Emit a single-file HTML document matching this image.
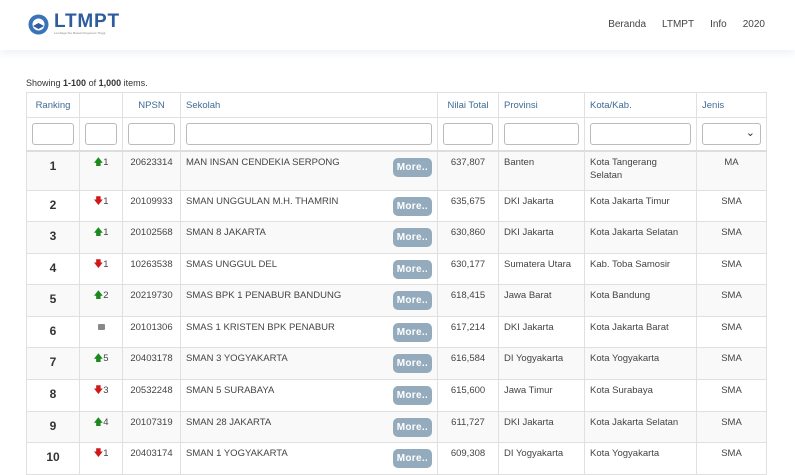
<!DOCTYPE html>
<html><head><style>
body{margin:0;width:795px;height:471px;overflow:hidden;background:#fff;font-family:"Liberation Sans",sans-serif;color:#333}
.hdr{height:50px;position:relative;box-shadow:0 4px 8px #eef3f9}
.logo{position:absolute;left:28px;top:13px;display:flex;align-items:center}
.logo .t{font-size:19px;font-weight:bold;color:#2d5d9f;letter-spacing:.8px;line-height:18px}
.logo .s{font-size:3px;color:#888}
.nav{position:absolute;top:19px;right:30px;font-size:10px;color:#444}
.nav span{margin-left:16px}
.show{position:absolute;left:26px;top:78px;font-size:9px;color:#333}
table{position:absolute;left:26px;top:92px;border-collapse:collapse;font-size:9.5px;table-layout:fixed;width:740px;line-height:13px}
td,th{border:1px solid #e0e0e0;padding:0 5px;vertical-align:top}
th{height:24px;vertical-align:middle;text-align:left;color:#3e6b95;font-weight:normal;font-size:9.5px}
.f td{height:32px;vertical-align:middle;border-bottom:2px solid #ddd}
.f div{height:22px;border:1px solid #bbb;border-radius:3px;box-sizing:border-box}
tr.r td{height:31.6px;padding-top:4px;box-sizing:border-box;color:#444}
tr.r:nth-child(odd) td{background:#f9f9f9}
.rk{font-size:12px;font-weight:bold;text-align:center;padding-top:8px!important;color:#333!important}
.c{text-align:center}
.more{float:right;background:#93abbd;color:#fff;border-radius:5px;font-size:10px;font-weight:bold;padding:3px 4px;margin-top:2px;letter-spacing:.3px}
.up{color:#1a8a1a}.dn{color:#d01818}
</style></head><body>
<div class="hdr">
<div class="logo"><svg width="21" height="21" viewBox="0 0 21 21"><circle cx="10.5" cy="10.5" r="10" fill="#3a74b8"/><circle cx="10.5" cy="10.5" r="6" fill="#fff"/><path d="M5 12 L10.5 9 L16 12 L10.5 15Z" fill="#2d5d9f"/></svg><div style="margin-left:5px"><div class="t">LTMPT</div><div class="s">Lembaga Tes Masuk Perguruan Tinggi</div></div></div>
<div class="nav"><span>Beranda</span><span>LTMPT</span><span>Info</span><span>2020</span></div>
</div>
<div class="show">Showing <b>1-100</b> of <b>1,000</b> items.</div>
<table>
<colgroup><col style="width:53px"><col style="width:43px"><col style="width:58px"><col style="width:257px"><col style="width:61px"><col style="width:86px"><col style="width:112px"><col style="width:70px"></colgroup>
<tr><th class="c">Ranking</th><th></th><th class="c">NPSN</th><th>Sekolah</th><th class="c">Nilai Total</th><th>Provinsi</th><th>Kota/Kab.</th><th>Jenis</th></tr>
<tr class="f"><td><div></div></td><td><div></div></td><td><div></div></td><td><div></div></td><td><div></div></td><td><div></div></td><td><div></div></td><td><div style="text-align:right;padding-right:5px;font-size:11px;line-height:18px">&#8964;</div></td></tr>
<tr class="r"><td class="rk" style="height:39px">1</td><td class="c"><span class="up">&#129093;</span>1</td><td class="c">20623314</td><td>MAN INSAN CENDEKIA SERPONG<span class="more">More..</span></td><td class="c">637,807</td><td>Banten</td><td>Kota Tangerang<br>Selatan</td><td class="c">MA</td></tr>
<tr class="r"><td class="rk">2</td><td class="c"><span class="dn">&#129095;</span>1</td><td class="c">20109933</td><td>SMAN UNGGULAN M.H. THAMRIN<span class="more">More..</span></td><td class="c">635,675</td><td>DKI Jakarta</td><td>Kota Jakarta Timur</td><td class="c">SMA</td></tr>
<tr class="r"><td class="rk">3</td><td class="c"><span class="up">&#129093;</span>1</td><td class="c">20102568</td><td>SMAN 8 JAKARTA<span class="more">More..</span></td><td class="c">630,860</td><td>DKI Jakarta</td><td>Kota Jakarta Selatan</td><td class="c">SMA</td></tr>
<tr class="r"><td class="rk">4</td><td class="c"><span class="dn">&#129095;</span>1</td><td class="c">10263538</td><td>SMAS UNGGUL DEL<span class="more">More..</span></td><td class="c">630,177</td><td>Sumatera Utara</td><td>Kab. Toba Samosir</td><td class="c">SMA</td></tr>
<tr class="r"><td class="rk">5</td><td class="c"><span class="up">&#129093;</span>2</td><td class="c">20219730</td><td>SMAS BPK 1 PENABUR BANDUNG<span class="more">More..</span></td><td class="c">618,415</td><td>Jawa Barat</td><td>Kota Bandung</td><td class="c">SMA</td></tr>
<tr class="r"><td class="rk">6</td><td class="c"><span style="display:inline-block;width:7px;height:6px;background:#888;border-radius:1px"></span></td><td class="c">20101306</td><td>SMAS 1 KRISTEN BPK PENABUR<span class="more">More..</span></td><td class="c">617,214</td><td>DKI Jakarta</td><td>Kota Jakarta Barat</td><td class="c">SMA</td></tr>
<tr class="r"><td class="rk">7</td><td class="c"><span class="up">&#129093;</span>5</td><td class="c">20403178</td><td>SMAN 3 YOGYAKARTA<span class="more">More..</span></td><td class="c">616,584</td><td>DI Yogyakarta</td><td>Kota Yogyakarta</td><td class="c">SMA</td></tr>
<tr class="r"><td class="rk">8</td><td class="c"><span class="dn">&#129095;</span>3</td><td class="c">20532248</td><td>SMAN 5 SURABAYA<span class="more">More..</span></td><td class="c">615,600</td><td>Jawa Timur</td><td>Kota Surabaya</td><td class="c">SMA</td></tr>
<tr class="r"><td class="rk">9</td><td class="c"><span class="up">&#129093;</span>4</td><td class="c">20107319</td><td>SMAN 28 JAKARTA<span class="more">More..</span></td><td class="c">611,727</td><td>DKI Jakarta</td><td>Kota Jakarta Selatan</td><td class="c">SMA</td></tr>
<tr class="r"><td class="rk">10</td><td class="c"><span class="dn">&#129095;</span>1</td><td class="c">20403174</td><td>SMAN 1 YOGYAKARTA<span class="more">More..</span></td><td class="c">609,308</td><td>DI Yogyakarta</td><td>Kota Yogyakarta</td><td class="c">SMA</td></tr>
</table>
</body></html>
